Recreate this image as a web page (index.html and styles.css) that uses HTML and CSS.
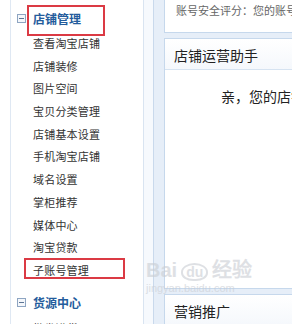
FILE: index.html
```html
<!DOCTYPE html>
<html lang="zh-CN">
<head>
    <meta charset="UTF-8">
    <title>店铺管理</title>
    <link rel="stylesheet" href="styles.css">
</head>
<body>
    <div class="page">
        <div class="sidebar">
            <div class="group-title"><span class="fold"></span>店铺管理</div>
            <ul class="menu">
                <li>查看淘宝店铺</li>
                <li>店铺装修</li>
                <li>图片空间</li>
                <li>宝贝分类管理</li>
                <li>店铺基本设置</li>
                <li>手机淘宝店铺</li>
                <li>域名设置</li>
                <li>掌柜推荐</li>
                <li>媒体中心</li>
                <li>淘宝贷款</li>
                <li>子账号管理</li>
            </ul>
            <div class="group-title"><span class="fold"></span>货源中心</div>
            <ul class="menu">
                <li>批发进货</li>
            </ul>
        </div>
        <div class="gutter"></div>
        <div class="main">
            <div class="panel panel-top">
                <p class="score">账号安全评分：您的账号安全等级</p>
            </div>
            <div class="panel panel-helper">
                <div class="panel-head">店铺运营助手</div>
                <div class="panel-body">
                    <p class="greet">亲，您的店铺还没有开张</p>
                </div>
            </div>
            <div class="panel">
                <div class="panel-head">营销推广</div>
            </div>
        </div>

        <div class="mark mark-shop"></div>
        <div class="mark mark-sub"></div>

        <div class="watermark">
            <div class="wm-logo">Bai<span class="wm-du">du</span>经验</div>
            <div class="wm-url">jingyan.baidu.com</div>
        </div>
    </div>
</body>
</html>
```

FILE: styles.css
```css
body {
    margin: 0;
    padding: 0;
    background: #fff;
    font-family: "Noto Sans CJK SC", "Liberation Sans", sans-serif;
    color: #333;
}

.page {
    position: relative;
    display: flex;
    width: 292px;
    height: 324px;
    overflow: hidden;
}

.sidebar {
    width: 132px;
    margin-left: 10px;
    padding-top: 6px;
    border-left: 1px solid #dfe8f3;
    border-right: 1px solid #d9e4f1;
    flex-shrink: 0;
}

.group-title {
    display: flex;
    align-items: center;
    height: 24px;
    font-size: 12px;
    font-weight: bold;
    color: #245c9c;
}

.fold {
    position: relative;
    width: 7px;
    height: 7px;
    margin: 0 7px 0 6px;
    border: 1px solid #8ea5c2;
    background: #f4f7fb;
}

.fold::after {
    content: "";
    position: absolute;
    left: 1px;
    right: 1px;
    top: 3px;
    height: 1px;
    background: #5d7595;
}

.menu {
    list-style: none;
    margin: 0;
    padding: 2px 0 9px 22px;
}

.menu li {
    height: 22.7px;
    line-height: 22.7px;
    font-size: 11px;
    letter-spacing: 0.2px;
    color: #333;
}

.gutter {
    width: 9px;
    background: #f6f9fd;
    border-right: 1px solid #c9d9ec;
    flex-shrink: 0;
}

.main {
    flex: 1;
    padding-left: 10px;
    background: #e6eef8;
}

.panel {
    background: #fff;
    border: 1px solid #c6d8ec;
    border-right: none;
    margin-bottom: 5px;
}

.panel-top {
    box-sizing: border-box;
    height: 45px;
    margin-top: -12px;
    padding: 15px 0 0 11px;
    border-top: none;
    overflow: hidden;
}

.score {
    margin: 0;
    font-size: 11px;
    line-height: 15px;
    color: #666;
    white-space: nowrap;
}

.panel-head {
    box-sizing: border-box;
    height: 31px;
    padding: 2px 0 0 9px;
    line-height: 29px;
    font-size: 14px;
    color: #222;
    background: linear-gradient(#ffffff, #f5f8fc);
    border-bottom: 1px solid #d6e3f1;
    white-space: nowrap;
    overflow: hidden;
}

.panel-helper .panel-body {
    box-sizing: border-box;
    height: 218px;
    padding: 16px 0 0 56px;
}

.greet {
    margin: 0;
    font-size: 14px;
    line-height: 20px;
    color: #222;
    white-space: nowrap;
}

.mark {
    position: absolute;
    border: 2px solid #db3a44;
}

.mark-shop {
    left: 27px;
    top: 5px;
    width: 74px;
    height: 27px;
}

.mark-sub {
    left: 24px;
    top: 258px;
    width: 97px;
    height: 17px;
}

.watermark {
    position: absolute;
    left: 146px;
    top: 258px;
    color: #c9cdd3;
    opacity: 0.6;
}

.wm-logo {
    font-family: "Liberation Sans", sans-serif;
    font-size: 20px;
    font-weight: bold;
    line-height: 24px;
}

.wm-du {
    display: inline-block;
    margin: 0 4px;
    padding: 0 3px;
    font-size: 14px;
    border: 2px solid #c9cdd3;
    border-radius: 50% 50% 45% 45%;
    line-height: 14px;
}

.wm-url {
    font-family: "Liberation Sans", sans-serif;
    font-size: 11px;
    line-height: 12px;
}
```
